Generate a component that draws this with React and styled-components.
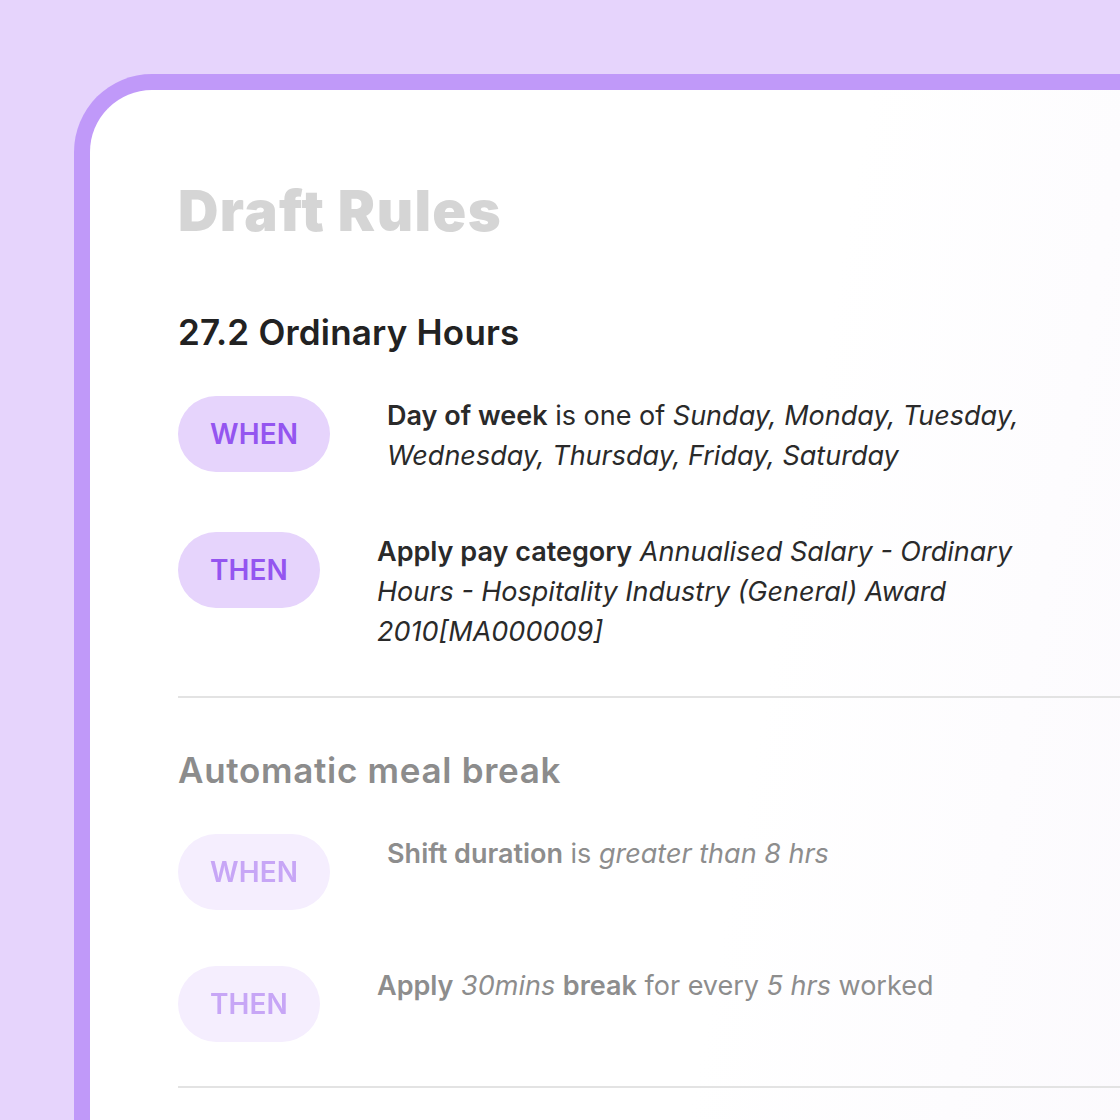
import React from 'react'
import styled, { createGlobalStyle } from 'styled-components';

const GlobalStyle = createGlobalStyle`
  html, body {
    margin: 0;
    padding: 0;
    background: #e6d4fc;
  }
  body {
    font-family: Inter, "Noto Sans", sans-serif;
    overflow: hidden;
  }
`

const rules = [
  {
    title: '27.2 Ordinary Hours',
    muted: false,
    rows: [
      {
        kind: 'WHEN',
        text: (
          <>
            <b>Day of week</b> is one of <i>Sunday, Monday, Tuesday, Wednesday, Thursday, Friday, Saturday</i>
          </>
        ),
      },
      {
        kind: 'THEN',
        text: (
          <>
            <b>Apply pay category</b> <i>Annualised Salary - Ordinary Hours - Hospitality Industry (General) Award 2010[MA000009]</i>
          </>
        ),
      },
    ],
  },
  {
    title: 'Automatic meal break',
    muted: true,
    rows: [
      {
        kind: 'WHEN',
        text: (
          <>
            <b>Shift duration</b> is <i>greater than 8 hrs</i>
          </>
        ),
      },
      {
        kind: 'THEN',
        text: (
          <>
            <b>Apply</b> <i>30mins</i> <b>break</b> for every <i>5 hrs</i> worked
          </>
        ),
      },
    ],
  },
];

export default function App() {
  return (
    <>
      <GlobalStyle />
      <SPage>
        <SCard>
          <STitle>Draft Rules</STitle>
          {rules.map((rule) => (
            <SSection key={rule.title}>
              <SHeading $muted={rule.muted}>{rule.title}</SHeading>
              <SRows>
                {rule.rows.map((row) => (
                  <SRow key={row.kind}>
                    <SPill $muted={rule.muted}>{row.kind}</SPill>
                    <SText $muted={rule.muted}>{row.text}</SText>
                  </SRow>
                ))}
              </SRows>
            </SSection>
          ))}
        </SCard>
      </SPage>
    </>
  )
};

const SPage = styled.div`
  width: 1120px;
  height: 1120px;
  padding: 74px 0 0 74px;
  box-sizing: border-box;
  overflow: hidden;
`

const SCard = styled.div`
  width: 1120px;
  height: 1120px;
  box-sizing: border-box;
  background: linear-gradient(100deg, #ffffff 60%, #fbf9fd 100%);
  border-top: 16px solid #c099f9;
  border-left: 16px solid #c099f9;
  border-top-left-radius: 78px;
  padding: 86px 0 0 88px;
`

const STitle = styled.h1`
  margin: 0;
  font-family: Inter, Lato, sans-serif;
  font-weight: 900;
  font-size: 56px;
  line-height: 70px;
  color: #d5d5d5;
  letter-spacing: 1.4px;
`

const SSection = styled.div`
  margin: 64px 0 0;
  padding: 0 0 44px;
  border-bottom: 2px solid #e3e3e3;

  & + & {
    margin-top: 50px;
  }
`

const SHeading = styled.h2`
  margin: 0;
  font-size: 35px;
  line-height: 44px;
  font-weight: 600;
  letter-spacing: ${(p) => (p.$muted ? '0.7px' : '0.2px')};
  color: ${(p) => (p.$muted ? '#8c8c8c' : '#222222')};
`

const SRows = styled.div`
  margin: 42px 0 0;
  display: flex;
  flex-direction: column;
  gap: 56px;
`

const SRow = styled.div`
  display: flex;
  align-items: flex-start;
  gap: 57px;
`

const SPill = styled.div`
  flex: none;
  height: 76px;
  padding: 0 32px;
  border-radius: 38px;
  display: flex;
  align-items: center;
  font-size: 28px;
  font-weight: 600;
  letter-spacing: 0.1px;
  background: ${(p) => (p.$muted ? '#f5eefe' : '#e6d4fc')};
  color: ${(p) => (p.$muted ? '#c7a6f6' : '#9455f0')};
  filter: ${(p) => (p.$muted ? 'blur(0.6px)' : 'none')};
`

const SText = styled.div`
  max-width: 665px;
  font-size: 27px;
  line-height: 40px;
  letter-spacing: 0;
  color: ${(p) => (p.$muted ? '#8d8d8d' : '#2a2a2a')};

  & b {
    font-weight: 600;
  }
`
